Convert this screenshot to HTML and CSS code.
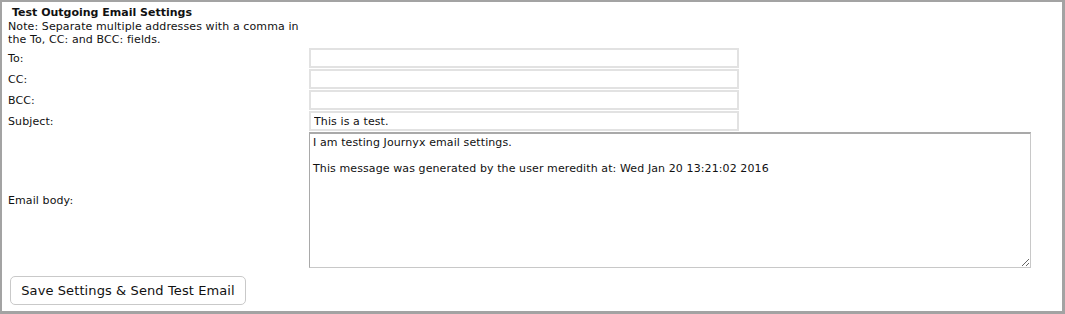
FILE: index.html
```html
<!DOCTYPE html>
<html lang="en">
<head>
    <meta charset="UTF-8">
    <meta name="viewport" content="width=device-width, initial-scale=1.0">
    <title>Test Outgoing Email Settings</title>
    <link rel="stylesheet" href="styles.css">
</head>
<body>
    <div class="panel">
        <h3 class="title">Test Outgoing Email Settings</h3>
        <p class="note">Note: Separate multiple addresses with a comma in<br>the To, CC: and BCC: fields.</p>
        <div class="fields">
            <label for="to">To:</label>
            <input type="text" id="to" class="field">
            <label for="cc">CC:</label>
            <input type="text" id="cc" class="field">
            <label for="bcc">BCC:</label>
            <input type="text" id="bcc" class="field">
            <label for="subject">Subject:</label>
            <input type="text" id="subject" class="field" value="This is a test.">
            <label for="body">Email body:</label>
            <textarea id="body" class="body-text">I am testing Journyx email settings.

This message was generated by the user meredith at: Wed Jan 20 13:21:02 2016</textarea>
        </div>
        <button class="send">Save Settings &amp; Send Test Email</button>
    </div>
</body>
</html>
```

FILE: styles.css
```css
html, body {
    margin: 0;
    height: 100%;
}
body {
    font-family: Verdana, "DejaVu Sans", sans-serif;
    font-size: 11px;
    letter-spacing: 0.1px;
    color: #111;
    background: #fff;
}
.panel {
    box-sizing: border-box;
    height: 314px;
    border-style: solid;
    border-color: #a3a3a3;
    border-width: 2px 3px 3px 2px;
    padding: 4px 6px;
}
.title {
    margin: 0 0 0 4px;
    font-size: 11px;
    line-height: 14px;
    font-weight: bold;
    letter-spacing: 0;
}
.note {
    margin: 0;
    line-height: 13px;
}
.fields {
    display: grid;
    grid-template-columns: 301px 1fr;
    row-gap: 1px;
    align-items: center;
    margin-top: 2px;
}
.field {
    box-sizing: border-box;
    width: 430px;
    height: 20px;
    margin: 0;
    padding: 1px 3px;
    border: 2px solid #e2e2e2;
    font-family: inherit;
    font-size: 11px;
    letter-spacing: 0.1px;
    color: #111;
}
.body-text {
    box-sizing: border-box;
    width: 722px;
    height: 136px;
    margin: 0;
    padding: 2px 3px;
    border: 1px solid #c8c8c8;
    border-top: 2px solid #a9a9a9;
    border-left: 1px solid #a9a9a9;
    font-family: inherit;
    font-size: 11px;
    letter-spacing: 0.1px;
    line-height: 13px;
    color: #111;
}
.send {
    display: block;
    margin: 8px 0 0 2px;
    width: 236px;
    height: 29px;
    padding: 0;
    background: #fff;
    border: 1px solid #c9c9c9;
    border-radius: 5px;
    font-family: inherit;
    font-size: 13px;
    letter-spacing: 0.1px;
    color: #111;
    cursor: pointer;
}
```
